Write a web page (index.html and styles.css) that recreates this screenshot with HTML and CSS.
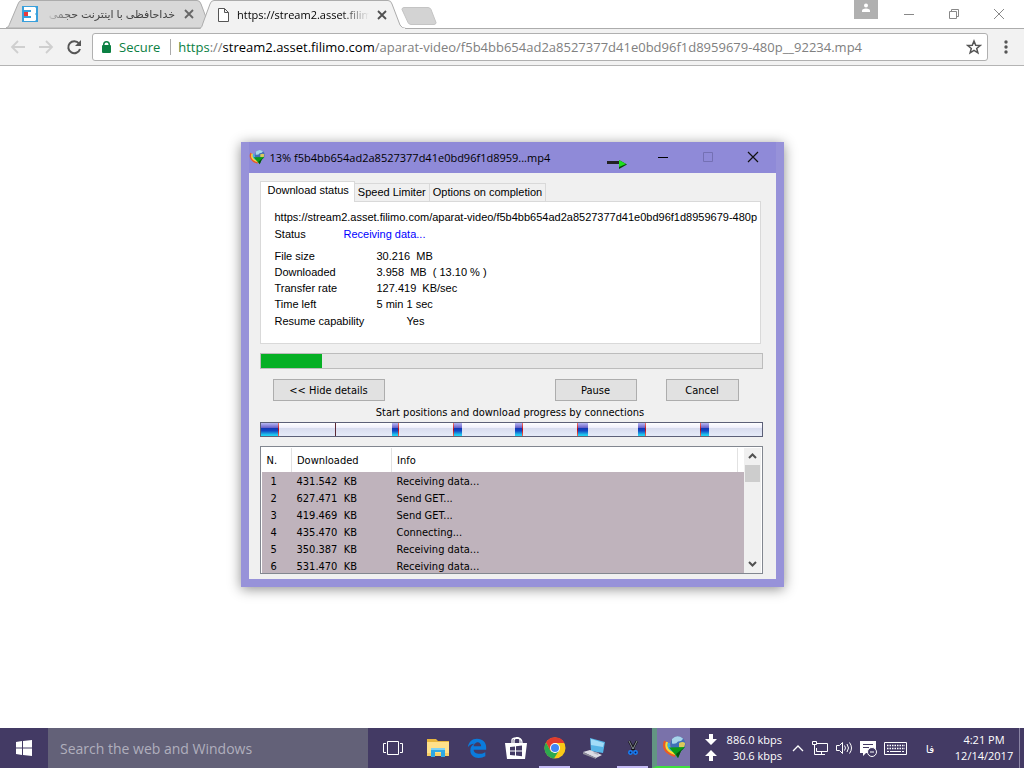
FILE: index.html
```
<!DOCTYPE html>
<html lang="en">
<head>
<meta charset="utf-8">
<title>Download progress</title>
<link rel="stylesheet" href="styles.css">
</head>
<body>
<header class="browser">
  <div class="strip">
    <div class="tabs" role="tablist">
      <div class="tab tab-back">
        <svg class="tab-shape" viewBox="0 0 204 28" preserveAspectRatio="none"><path d="M0 28 C3 27 3 25 4 23 L12 4 Q13 .5 16 .5 H191 Q194 .5 195 4 L204 28Z" fill="#d8d8d8" stroke="#acacac"/></svg>
        <svg class="favicon" viewBox="0 0 16 16"><path fill="#39a0dc" d="M0 0h16v16H0z"/><path fill="#fff" d="M2 1h11l1 1v5l-1 1 1 1v5l-1 1H2v-3h7v-2H6V6h3V4H2z"/><path fill="#e93a3c" d="M2 6h4v4H2z"/></svg>
        <button class="tab-title fade-left" role="tab" dir="rtl" lang="fa">خداحافظی با اینترنت حجمی</button>
        <button class="tab-close" aria-label="Close tab"><svg viewBox="0 0 10 10" width="10" height="10"><path d="M1 1l8 8M9 1L1 9" stroke="#666" stroke-width="1.8"/></svg></button>
      </div>
      <div class="tab tab-front">
        <svg class="tab-shape" viewBox="0 0 206 29" preserveAspectRatio="none"><path d="M0 28.500 C2 27 2 26 3 23 L10 4 Q11 .5 14 .5 H188 Q191 .5 192 4 L200 25 Q202 28.500 206 28.500 V30 H0Z" fill="#f2f2f2" stroke="#acacac"/><path d="M1 29h204" stroke="#f2f2f2" stroke-width="2"/></svg>
        <svg class="favicon" viewBox="0 0 16 16"><path d="M3.500 1.500h6l4 4v9h-10zM9.500 1.500v4h4" fill="#fff" stroke="#555"/></svg>
        <button class="tab-title fade-right" role="tab" aria-selected="true">https://stream2.asset.filim</button>
        <button class="tab-close" aria-label="Close tab"><svg viewBox="0 0 10 10" width="10" height="10"><path d="M1 1l8 8M9 1L1 9" stroke="#505050" stroke-width="1.8"/></svg></button>
      </div>
      <button class="new-tab" aria-label="New tab"><svg viewBox="0 0 36 18" width="36" height="18"><path d="M3 .5h24q2 0 3 2l5 13q0 2-2 2H10q-2 0-3-2L1 2.500Q1 .5 3 .5z" fill="#d3d3d3" stroke="#c4c4c4"/></svg></button>
    </div>
    <div class="window-buttons">
      <button class="profile" aria-label="Profile"><svg viewBox="0 0 24 19" width="24" height="19"><path fill="#b0b0b0" d="M0 0h24v19H0z"/><circle cx="12" cy="5.500" r="2" fill="#fff"/><path d="M8 12V10.500Q8 9 12 8.500q4 .5 4 2V12z" fill="#fff"/></svg></button>
      <button class="win" aria-label="Minimize"><svg viewBox="0 0 12 12" width="12" height="12"><path d="M1 6.500h10" stroke="#888"/></svg></button>
      <button class="win" aria-label="Restore"><svg viewBox="0 0 12 12" width="12" height="12"><path d="M1.500 3.500h7v7h-7zM3.500 3V1.500h7v7H9" fill="none" stroke="#888"/></svg></button>
      <button class="win" aria-label="Close"><svg viewBox="0 0 12 12" width="12" height="12"><path d="M1 1l10 10M11 1L1 11" stroke="#888"/></svg></button>
    </div>
  </div>
  <div class="toolbar">
    <button class="nav" aria-label="Back"><svg viewBox="0 0 16 16" width="16" height="16"><path d="M15 8H2M8 2L2 8l6 6" fill="none" stroke="#cfcfcf" stroke-width="1.800"/></svg></button>
    <button class="nav" aria-label="Forward"><svg viewBox="0 0 16 16" width="16" height="16"><path d="M1 8h13M8 2l6 6-6 6" fill="none" stroke="#cfcfcf" stroke-width="1.800"/></svg></button>
    <button class="nav" aria-label="Reload"><svg viewBox="0 0 16 16" width="16" height="16"><path d="M13 4.500A6 6 0 1 0 14 10" fill="none" stroke="#555" stroke-width="2"/><path d="M15 1v6H9z" fill="#555"/></svg></button>
    <div class="omnibox">
      <svg viewBox="0 0 9 12" width="9" height="12"><path fill="#0b8043" d="M0 5q0-1 1-1V3.500a3.500 3.500 0 0 1 7 0V4q1 0 1 1v6q0 1-1 1H1q-1 0-1-1zm2.500-1h4v-.5a2 2 0 0 0-4 0z"/></svg>
      <span class="secure">Secure</span>
      <div class="url" role="textbox" aria-label="Address" contenteditable="true" spellcheck="false"><span class="scheme">https</span><span class="dim">://</span>stream2.asset.filimo.com<span class="dim">/aparat-video/f5b4bb654ad2a8527377d41e0bd96f1d8959679-480p__92234.mp4</span></div>
      <button class="star" aria-label="Bookmark"><svg viewBox="0 0 16 16" width="16" height="16"><path d="M8 2l1.700 4.200 4.500.300-3.500 2.900 1.200 4.400L8 11.400l-3.900 2.400 1.200-4.400L1.800 6.500l4.500-.300z" fill="none" stroke="#555" stroke-width="1.500"/></svg></button>
    </div>
    <button class="more" aria-label="Menu"><svg viewBox="0 0 4 14" width="4" height="14"><g fill="#555"><circle cx="2" cy="2" r="1.700"/><circle cx="2" cy="7" r="1.700"/><circle cx="2" cy="12" r="1.700"/></g></svg></button>
  </div>
</header>

<main class="page">
  <section class="dialog" role="dialog" aria-labelledby="dialog-title">
    <div class="titlebar">
      <svg class="app-icon" viewBox="0 0 24 24"><use href="#idm"/></svg>
      <h1 id="dialog-title">13% f5b4bb654ad2a8527377d41e0bd96f1d8959...mp4</h1>
      <svg class="arrow-mark" viewBox="0 0 20 9" width="20" height="9"><path d="M0 1h13v3H0z" fill="#222"/><path d="M12 0l8 4.500L12 9z" fill="#064d06"/><path d="M12 0l7 4-7 3z" fill="#1fe01f"/></svg>
      <div class="dialog-buttons">
        <button aria-label="Minimize"><svg viewBox="0 0 12 12" width="12" height="12"><path d="M1 6.500h10" stroke="#000"/></svg></button>
        <button aria-label="Maximize" disabled><svg viewBox="0 0 12 12" width="12" height="12"><path d="M1.500 1.500h9v9h-9z" fill="none" stroke="#7470b4"/></svg></button>
        <button aria-label="Close"><svg viewBox="0 0 12 12" width="12" height="12"><path d="M1 1l10 10M11 1L1 11" stroke="#111" stroke-width="1.200"/></svg></button>
      </div>
    </div>
    <div class="dialog-body">
      <div class="dtabs" role="tablist">
        <button class="dtab dtab-on" role="tab" aria-selected="true">Download status</button>
        <button class="dtab" role="tab">Speed Limiter</button>
        <button class="dtab" role="tab">Options on completion</button>
      </div>
      <div class="panel" role="tabpanel">
        <p class="file-url">https://stream2.asset.filimo.com/aparat-video/f5b4bb654ad2a8527377d41e0bd96f1d8959679-480p</p>
        <dl class="status"><dt>Status</dt><dd>Receiving data...</dd></dl>
        <dl class="facts">
          <dt>File size</dt><dd>30.216&nbsp; MB</dd>
          <dt>Downloaded</dt><dd>3.958&nbsp; MB&nbsp; ( 13.10 % )</dd>
          <dt>Transfer rate</dt><dd>127.419&nbsp; KB/sec</dd>
          <dt>Time left</dt><dd>5 min 1 sec</dd>
          <dt class="last">Resume capability</dt><dd class="last resume">Yes</dd>
        </dl>
      </div>
      <progress class="total" value="61" max="501" aria-label="Downloaded"></progress>
      <div class="actions">
        <button class="btn hide">&lt;&lt; Hide details</button>
        <button class="btn pause">Pause</button>
        <button class="btn cancel">Cancel</button>
      </div>
      <p class="caption">Start positions and download progress by connections</p>
      <svg class="segments" viewBox="0 0 501 13" preserveAspectRatio="none">
        <defs>
          <linearGradient id="blue" x2="0" y2="1"><stop offset="0" stop-color="#b9b9f4"/><stop offset=".36" stop-color="#6a62c8"/><stop offset=".4" stop-color="#1238b4"/><stop offset=".6" stop-color="#1248c4"/><stop offset=".9" stop-color="#20c4ee"/><stop offset="1" stop-color="#20d8f4"/></linearGradient>
          <linearGradient id="empty" x2="0" y2="1"><stop offset="0" stop-color="#fff"/><stop offset=".36" stop-color="#eeeefb"/><stop offset=".4" stop-color="#d8dcee"/><stop offset="1" stop-color="#e6ebf8"/></linearGradient>
          <linearGradient id="red" x2="0" y2="1"><stop offset="0" stop-color="#f47468"/><stop offset=".5" stop-color="#b80c18"/><stop offset="1" stop-color="#f46a50"/></linearGradient>
        </defs>
        <path fill="url(#empty)" d="M0 0h501v13H0z"/>
        <g fill="url(#blue)"><path d="M0 0h17v13H0z"/><path d="M131 0h6v13h-6z"/><path d="M192 0h9v13h-9z"/><path d="M254 0h7v13h-7z"/><path d="M316 0h11v13h-11z"/><path d="M377 0h7v13h-7z"/><path d="M440 0h8v13h-8z"/></g>
        <g fill="url(#red)"><path d="M17 0h1v13h-1z"/><path d="M137 0h1v13h-1z"/><path d="M192 0h1v13h-1z"/><path d="M261 0h1v13h-1z"/><path d="M316 0h1v13h-1z"/><path d="M384 0h1v13h-1z"/><path d="M439 0h1v13h-1z"/></g>
        <path fill="#5c2834" d="M74 0h1v13h-1z"/>
      </svg>
      <div class="list">
        <table>
          <thead><tr><th class="col-n">N.</th><th class="col-d">Downloaded</th><th>Info</th></tr></thead>
          <tbody>
            <tr><td>1</td><td>431.542&nbsp; KB</td><td>Receiving data...</td></tr>
            <tr><td>2</td><td>627.471&nbsp; KB</td><td>Send GET...</td></tr>
            <tr><td>3</td><td>419.469&nbsp; KB</td><td>Send GET...</td></tr>
            <tr><td>4</td><td>435.470&nbsp; KB</td><td>Connecting...</td></tr>
            <tr><td>5</td><td>350.387&nbsp; KB</td><td>Receiving data...</td></tr>
            <tr><td>6</td><td>531.470&nbsp; KB</td><td>Receiving data...</td></tr>
          </tbody>
        </table>
        <div class="scroll">
          <button aria-label="Scroll up"><svg viewBox="0 0 9 6" width="9" height="6"><path d="M1 5l3.500-3.500L8 5" fill="none" stroke="#505050" stroke-width="2"/></svg></button>
          <div class="thumb"></div>
          <button class="down" aria-label="Scroll down"><svg viewBox="0 0 9 6" width="9" height="6"><path d="M1 1l3.500 3.500L8 1" fill="none" stroke="#505050" stroke-width="2"/></svg></button>
        </div>
      </div>
    </div>
  </section>
</main>

<footer class="taskbar">
  <button class="start" aria-label="Start"><svg viewBox="0 0 16 16" width="16" height="16"><path fill="#fff" d="M0 2l6-1v6.500H0zM7 1l9-1v7.500H7zM0 8.500h6V15l-6-1zM7 8.500h9V16l-9-1z"/></svg></button>
  <input class="search" type="text" aria-label="Search" placeholder="Search the web and Windows">
  <button class="task-view" aria-label="Task View"><svg viewBox="0 0 20 14" width="20" height="14"><path d="M4.500.5h11v13h-11zM3 2.500H.5v9H3M17 2.500h2.500v9H17" fill="none" stroke="#fff"/></svg></button>
  <nav class="apps">
    <button aria-label="File Explorer"><svg viewBox="0 0 24 24" width="24" height="24"><path fill="#e8b63e" d="M1 3h9l2 2h11v4H1z"/><path fill="#ffe08a" d="M1 6h22v14H1z"/><path fill="#f8cf66" d="M1 17h22v3H1z"/><path fill="#2fa8e4" d="M5 12h14v9h-4v-5H9v5H5z"/><path fill="#7fd2f4" d="M5 12h14v2H5z"/></svg></button>
    <button aria-label="Edge"><svg viewBox="0 0 24 24" width="20" height="20"><path fill="#0a7bdc" d="M1 11C2 5 6 1 12 1c7 0 11 5 11 10v3H8c0 3 3 5 7 5 3 0 5-1 7-2v5c-2 1-5 2-8 2C8 24 4 20 4 15c0-4 2-7 5-8-4 0-6 2-8 4zm7-1h9c0-3-2-5-4-5s-5 2-5 5z"/></svg></button>
    <button aria-label="Store"><svg viewBox="0 0 24 24" width="24" height="24"><path d="M8 7V4q0-2 4-2t4 2v3M10 7V4q1-3 5-2 3 1 3 5" fill="none" stroke="#fff" stroke-width="1.300"/><path fill="#fff" d="M1 7h22l-2 16H3z"/><path fill="#433a64" d="M6 11l5-.6v4H6zM12 10.300l6-.8v4.900h-6zM6 15.500h5v4L6 19zM12 15.500h6v4.800l-6-.7z"/></svg></button>
    <button class="running" aria-label="Chrome"><svg viewBox="0 0 24 24" width="24" height="24"><circle cx="12" cy="12" r="10.500" fill="#fbc917"/><path fill="#e33b2e" d="M3 6.500A10.500 10.500 0 0 1 21.500 7H12L7.500 15z"/><path fill="#2da94f" d="M3 6.500A10.500 10.500 0 0 0 11 22.500l5-8L12 17l-4.500-2z"/><circle cx="12" cy="12" r="5" fill="#fff"/><circle cx="12" cy="12" r="4" fill="#4285f4"/></svg></button>
    <button aria-label="Computer"><svg viewBox="0 0 24 24" width="24" height="24"><path fill="#56b4e6" d="M8 2l15 4-2 11-12-2z"/><path fill="#a2dcf8" d="M9 3l13 4-1 4-12-2z"/><path fill="#dcdce4" d="M1 16l7-2 12 5-6 3z"/><path fill="#91919d" d="M1 16l13 6v1L1 18z"/><path fill="#b4b4c0" d="M13 16l4 1-1 2-5-2z"/></svg></button>
    <button class="running" aria-label="Snipping"><svg viewBox="0 0 12 16" width="12" height="16"><path d="M2 1l5 9M10 1L5 10" stroke="#111" stroke-width="2.500"/><path d="M2 1l4 8M10 1L6 9" stroke="#aab4bc" stroke-width=".8"/><g fill="#082060" stroke="#1680f8" stroke-width="1.500"><circle cx="3.500" cy="12.500" r="1.700"/><circle cx="8.500" cy="12.500" r="1.700"/></g></svg></button>
    <button class="active" aria-label="Download Manager"><svg viewBox="0 0 24 24" width="24" height="24">
      <g id="idm"><circle cx="16" cy="9" r="7.500" fill="#3f70b8"/><path d="M10 4q5-5 11-.5-1 3-5 3-2 3-6 2z" fill="#a7d4ea"/><path d="M17 8q4-2 6 0 0 4-3 6l-3-2z" fill="#dcc95a"/><g fill="none" stroke-width="2.200"><path d="M3 6Q-1 17 13 21" stroke="#ef5b20"/><path d="M5 7Q2 15.500 14 19" stroke="#ffdc29"/><path d="M7 8Q5 14 14 17" stroke="#35b8e6"/></g><path d="M7 12.500L23 12l-4 4-3 7z" fill="#0b9a1a"/><path d="M23 12l-4 4-3 7-2-4z" fill="#04500c"/></g></svg></button>
  </nav>
  <div class="tray">
    <svg viewBox="0 0 12 32" width="12" height="32"><path fill="#fff" d="M4 2h4v5h4l-6 6-6-6h4zM6 18l6 6H8v5H4v-5H0z"/></svg>
    <div class="rates"><span>886.0 kbps</span><span>30.6 kbps</span></div>
    <button aria-label="Show hidden icons"><svg viewBox="0 0 12 8" width="12" height="8"><path d="M1 7l5-5 5 5" fill="none" stroke="#fff" stroke-width="1.300"/></svg></button>
    <button aria-label="Network"><svg viewBox="0 0 18 16" width="18" height="16"><path d="M6 3.500h10.500v8H5.500V8M10.500 12v2.500M7 14.500h7M1.500 1.500h4v3h-4zM3.500 5v9.500H7" fill="none" stroke="#fff"/></svg></button>
    <button aria-label="Volume"><svg viewBox="0 0 17 14" width="17" height="14"><path d="M.5 4.500h3l3-3v11l-3-3h-3zM8.500 4.500q2 2.500 0 5M11 3q3 4 0 8M13.500 1.500q4 5.500 0 11" fill="none" stroke="#fff"/></svg></button>
    <button aria-label="Notifications"><svg viewBox="0 0 17 17" width="17" height="17"><path fill="#fff" d="M0 1h16v12H6l-3 3v-3H0z"/><path d="M3 4.500h10M3 7.500h6" stroke="#433a64"/><circle cx="12" cy="12" r="4.500" fill="#433a64" stroke="#fff"/><path d="M10 12h4" stroke="#fff"/></svg></button>
    <button class="keyboard" aria-label="Touch keyboard"><svg viewBox="0 0 24 13" width="24" height="13"><path d="M.5.5h22v12H.5z" fill="none" stroke="#fff"/><path d="M3 3.500h18M3 6.500h18" stroke="#fff" stroke-width="1.500" stroke-dasharray="1.500 1"/><path d="M3 9.500h2M6 9.500h11M18 9.500h2" stroke="#fff"/></svg></button>
    <button class="lang" lang="fa">فا</button>
    <div class="clock"><span>4:21 PM</span><span>12/14/2017</span></div>
    <button class="show-desktop" aria-label="Show desktop"></button>
  </div>
</footer>
</body>
</html>
```
FILE: styles.css
```
* { box-sizing: border-box; }
body {
  margin: 0;
  min-height: 100vh;
  display: flex;
  flex-direction: column;
  background: #fff;
  font-family: "Open Sans", "Noto Sans", "DejaVu Sans", sans-serif;
  color: #000;
}
button { border: 0; padding: 0; background: none; font: inherit; color: inherit; }
svg { display: block; flex: none; }
p, h1, dl, dd { margin: 0; }

/* browser frame */
.strip { display: flex; justify-content: space-between; height: 29px; border-bottom: 1px solid #acacac; }
.tabs { display: flex; padding-left: 6px; }
.tab { position: relative; display: flex; align-items: center; height: 29px; }
.tab-back { width: 194px; padding: 0 4px 0 16px; gap: 7px; height: 28px; }
.tab-front { width: 206px; padding: 0 17px 0 15px; gap: 6px; z-index: 1; }
.tab-shape { position: absolute; top: 0; left: 0; height: 100%; width: 100%; }
.tab-back .tab-shape { width: 204px; }
.favicon { position: relative; width: 16px; height: 16px; }
.tab-title {
  position: relative; flex: 1; min-width: 0; overflow: hidden;
  white-space: nowrap; text-align: start; font-size: 11px; line-height: 20px;
}
.tab-back .tab-title { color: #444; }
.fade-left { mask-image: linear-gradient(to right, transparent, #000 28px); }
.fade-right { mask-image: linear-gradient(to left, transparent, #000 28px); }
.tab-close { position: relative; width: 14px; height: 14px; display: grid; place-items: center; }
.new-tab { align-self: center; margin: 3px 0 0 -5px; }
.window-buttons { display: flex; padding-right: 3px; }
.profile { align-self: flex-start; margin-right: 8px; }
.win { width: 45px; display: grid; place-items: center; }

.toolbar { display: flex; align-items: center; height: 37px; padding: 0 10px; background: #f2f2f2; border-bottom: 1px solid #b4b4b4; }
.nav { width: 16px; margin-right: 12px; }
.nav + .nav + .nav { margin-right: 10px; }
.omnibox {
  flex: 1; min-width: 0; display: flex; align-items: center; height: 28px; padding: 0 5px 0 9px;
  background: #fff; border: 1px solid #b0b0b0; border-radius: 3px; font-size: 13px; line-height: 20px;
}
.secure { margin-left: 8px; padding-right: 10px; border-right: 1px solid #aaa; color: #0b8043; line-height: 16px; }
.url { flex: 1; min-width: 0; padding-left: 7px; white-space: nowrap; overflow: hidden; }
.scheme { color: #0b8043; }
.dim { color: #808080; }
.more { width: 26px; display: grid; place-items: center; padding-left: 10px; }

/* download dialog */
.page { flex: 1; display: grid; place-items: center; padding-bottom: 66px; }
.dialog {
  width: 543px; max-width: 100%; padding: 0 8px 8px;
  background: #9792d9; box-shadow: 0 2px 12px rgba(0, 0, 0, .45);
}
.titlebar { display: flex; align-items: center; height: 31px; background: #8f8ad8; }
.app-icon { width: 16px; height: 16px; margin-right: 5px; }
.titlebar h1 { flex: 1; padding-top: 1px; font-size: 11px; font-weight: 400; line-height: 16px; white-space: nowrap; }
.arrow-mark { margin-top: 14px; }
.dialog-buttons { display: flex; margin-left: 14px; }
.dialog-buttons button { width: 45px; height: 30px; display: grid; place-items: center; }
.dialog-body {
  padding: 8px 13px 5px 11px; background: #f0f0f0;
  font-family: "DejaVu Sans Condensed", "Liberation Sans", sans-serif; font-size: 11px;
}
.dtabs { display: flex; align-items: flex-end; height: 20px; font-family: "Liberation Sans", Arial, sans-serif; }
.dtab { height: 18px; padding: 0 3px; border: 1px solid #d9d9d9; border-bottom: 0; border-left: 0; line-height: 17px; background: #f0f0f0; }
.dtab-on { height: 21px; padding: 0 5px 3px 7px; border-left: 1px solid #d9d9d9; background: #fff; position: relative; margin-bottom: -1px; z-index: 1; }
.panel {
  height: 143px; margin-right: 2px; padding: 7px 10px 0 14px; background: #fff; border: 1px solid #d9d9d9;
  font-family: "Liberation Sans", Arial, sans-serif; line-height: 16px;
}
.file-url { white-space: nowrap; }
.status { display: grid; grid-template-columns: 69px 1fr; margin: 1px 0 6px; }
.status dd { color: #0000ff; }
.facts { display: grid; grid-template-columns: 102px 1fr; }
.last { padding-top: 1px; }
.resume { padding-left: 30px; }
.total { appearance: none; display: block; width: 100%; height: 16px; margin-top: 9px; border: 1px solid #bcbcbc; background: #e6e6e6; }
.total::-webkit-progress-bar { background: #e6e6e6; }
.total::-webkit-progress-value { background: #06b025; }
.actions { display: flex; margin: 10px 24px 0 13px; }
.btn { height: 22px; padding-top: 1px; border: 1px solid #adadad; background: #e1e1e1; }
.hide { width: 112px; margin-right: auto; }
.pause { width: 82px; margin-right: 29px; }
.cancel { width: 73px; }
.caption { margin: 4px 0 1px; text-align: center; line-height: 16px; padding-right: 2px; }
.segments { width: 100%; height: 15px; border: 1px solid #5c6078; }
.list { display: flex; margin-top: 9px; height: 128px; border: 1px solid #828790; overflow: hidden; background: #fff; padding: 1px 1px 0; }
.list table { flex: 1; border-collapse: collapse; table-layout: fixed; background: #bfb3bc; text-align: left; }
.list th { height: 24px; padding: 2px 0 0 5px; font-weight: 400; background: #fff; border-right: 1px solid #e2e2e2; }
.list th:last-child { border-right: 0; background: linear-gradient(#e2e2e2, #e2e2e2) right 6px top / 1px 100% no-repeat #fff; }
.col-n { width: 30px; }
.col-d { width: 100px; }
.list td { height: 17px; padding: 2px 0 0 5px; line-height: 15px; }
.list td:first-child { padding-left: 9px; }
.scroll { width: 17px; display: flex; flex-direction: column; background: #f0f0f0; }
.scroll button { height: 17px; display: grid; place-items: center; }
.thumb { height: 17px; margin: 0 1px; background: #cdcdcd; }
.scroll .down { margin-top: auto; }

/* taskbar */
.taskbar { display: flex; height: 40px; background: #433a64; color: #fff; font-size: 11px; }
.start { width: 48px; display: grid; place-items: center; }
.search { width: 320px; padding: 0 12px; border: 0; background: #636178; color: #fff; font: 14px "Open Sans", sans-serif; }
.search::placeholder { color: #b0afbd; opacity: 1; }
.task-view { width: 50px; display: grid; place-items: center; }
.apps { display: flex; }
.apps button { width: 39px; display: grid; place-items: center; border: solid transparent; border-width: 2px 4px; background-clip: padding-box; }
.apps .running { border-bottom-color: #c4bbf4; border-left: 0; border-right: 0; width: 31px; margin: 0 4px; }
.apps .active { border: 0; border-left: 5px solid #639583; border-bottom: 2px solid #3fe03f; background: #7a72aa; width: 38px; }
.tray { display: flex; align-items: center; margin-left: auto; }
.rates, .clock { display: flex; flex-direction: column; line-height: 16px; text-align: right; }
.rates { width: 60px; margin: 0 10px 0 5px; white-space: nowrap; }
.tray button { margin-right: 7px; }
.clock { width: 70px; text-align: center; }
.tray .lang { width: 30px; margin-right: 4px; font-size: 11px; }
.tray .show-desktop { width: 5px; align-self: stretch; margin: 0; border-left: 1px solid #8a84a4; }
```
